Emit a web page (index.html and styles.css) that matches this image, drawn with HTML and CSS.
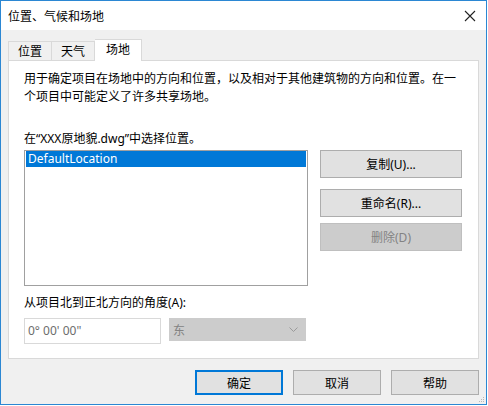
FILE: index.html
```html
<!DOCTYPE html>
<html lang="zh-CN">
<head>
  <meta charset="UTF-8" />
  <title>位置、气候和场地</title>
  <link rel="stylesheet" href="styles.css">
</head>
<body>

  <div class="window">
    <div class="titlebar">
      <span class="title">位置、气候和场地</span>
      <svg class="close" width="12" height="12" viewBox="0 0 12 12">
        <path d="M1 1 L11 11 M11 1 L1 11" stroke="#222" stroke-width="1.1" fill="none"/>
      </svg>
    </div>

    <div class="client">
      <div class="tabs">
        <div class="tab">位置</div>
        <div class="tab">天气</div>
        <div class="tab active">场地</div>
      </div>

      <div class="panel">
        <p class="desc">用于确定项目在场地中的方向和位置，以及相对于其他建筑物的方向和位置。在一个项目中可能定义了许多共享场地。</p>

        <div class="label">在“XXX原地貌.dwg”中选择位置。</div>
        <div class="site-row">
          <div class="listbox">
            <div class="item selected">DefaultLocation</div>
          </div>
          <div class="side-buttons">
            <button class="btn">复制(U)...</button>
            <button class="btn rename">重命名(R)...</button>
            <button class="btn" disabled>删除(D)</button>
          </div>
        </div>

        <div class="label angle-label">从项目北到正北方向的角度(A):</div>
        <div class="angle-row">
          <div class="angle-input">0° 00' 00"</div>
          <div class="combo">
            <span>东</span>
            <svg width="9" height="6" viewBox="0 0 9 6">
              <path d="M0.5 0.5 L4.5 4.5 L8.5 0.5" stroke="#9a9a9a" fill="none"/>
            </svg>
          </div>
        </div>
      </div>

      <div class="footer">
        <button class="btn default">确定</button>
        <button class="btn">取消</button>
        <button class="btn">帮助</button>
      </div>
    </div>

    <svg class="grip" width="7" height="7" viewBox="0 0 7 7">
      <rect x="5" y="1" width="1" height="1" fill="#b8b8b8"/>
      <rect x="3" y="3" width="1" height="1" fill="#b8b8b8"/>
      <rect x="5" y="3" width="1" height="1" fill="#b8b8b8"/>
      <rect x="1" y="5" width="1" height="1" fill="#b8b8b8"/>
      <rect x="3" y="5" width="1" height="1" fill="#b8b8b8"/>
      <rect x="5" y="5" width="1" height="1" fill="#b8b8b8"/>
    </svg>
  </div>

</body>
</html>
```

FILE: styles.css
```css
body {
  margin: 0;
  padding: 0;
  background: #ffffff;
  font-family: "Noto Sans", "Noto Sans CJK SC", sans-serif;
  font-size: 12px;
  color: #000;
}

.window {
  position: relative;
  width: 485px;
  height: 403px;
  border: 1px solid #2b87d3;
  background: #f0f0f0;
}

.titlebar {
  height: 29px;
  background: #fff;
  display: flex;
  align-items: center;
  justify-content: space-between;
  padding: 0 10px 0 7px;
}

.title {
  font-size: 12px;
}

.client {
  padding: 9px 7px 0 7px;
}

.tabs {
  display: flex;
  height: 21px;
  align-items: flex-end;
}

.tab {
  height: 19px;
  line-height: 19px;
  padding: 0 9px;
  border: 1px solid #d9d9d9;
  border-bottom: none;
  border-right: none;
  background: #f0f0f0;
  box-sizing: border-box;
}

.tab:nth-child(2) {
  border-right: 1px solid #d9d9d9;
}

.tab.active {
  height: 22px;
  line-height: 20px;
  margin-bottom: -1px;
  padding: 0 11px;
  background: #fff;
  border-right: 1px solid #d9d9d9;
  border-left: none;
  position: relative;
  z-index: 1;
}

.panel {
  width: 471px;
  height: 299px;
  box-sizing: border-box;
  border: 1px solid #d9d9d9;
  background: #fff;
  padding: 9px 16px 0 15px;
}

.desc {
  margin: 0;
  line-height: 18px;
  width: 440px;
}

.label {
  margin-top: 24px;
  line-height: 18px;
}

.site-row {
  display: flex;
  margin-top: 2px;
  gap: 12px;
}

.listbox {
  width: 284px;
  height: 136px;
  box-sizing: border-box;
  border: 1px solid #a0a0a0;
  padding: 0 1px;
}

.item {
  height: 16px;
  line-height: 16px;
  padding-left: 2px;
}

.item.selected {
  background: #0078d7;
  color: #fff;
}

.side-buttons {
  display: flex;
  flex-direction: column;
}

.btn {
  font-family: inherit;
  font-size: 12px;
  color: #000;
  background: #e1e1e1;
  border: 1px solid #adadad;
  height: 28px;
  width: 142px;
  padding: 0;
}

.side-buttons .btn + .btn {
  margin-top: 6px;
}

.side-buttons .rename {
  margin-top: 11px !important;
}

.btn:disabled {
  background: #cccccc;
  border-color: #bfbfbf;
  color: #838383;
}

.angle-label {
  margin-top: 8px;
}

.angle-row {
  display: flex;
  margin-top: 6px;
  gap: 8px;
  align-items: flex-start;
}

.angle-input {
  width: 137px;
  height: 26px;
  box-sizing: border-box;
  border: 1px solid #d9d9d9;
  line-height: 24px;
  padding-left: 3px;
  color: #6d6d6d;
}

.combo {
  width: 137px;
  height: 23px;
  box-sizing: border-box;
  background: #cccccc;
  border: 1px solid #cccccc;
  color: #838383;
  display: flex;
  align-items: center;
  justify-content: space-between;
  padding: 0 7px 0 3px;
}

.footer {
  display: flex;
  justify-content: flex-end;
  gap: 10px;
  margin-top: 11px;
  padding-right: 0;
}

.footer .btn {
  width: 88px;
  height: 25px;
}

.footer .default {
  border: 1px solid #0078d7;
  box-shadow: inset 0 0 0 1px #0078d7;
}

.grip {
  position: absolute;
  right: 1px;
  bottom: 1px;
}
```
